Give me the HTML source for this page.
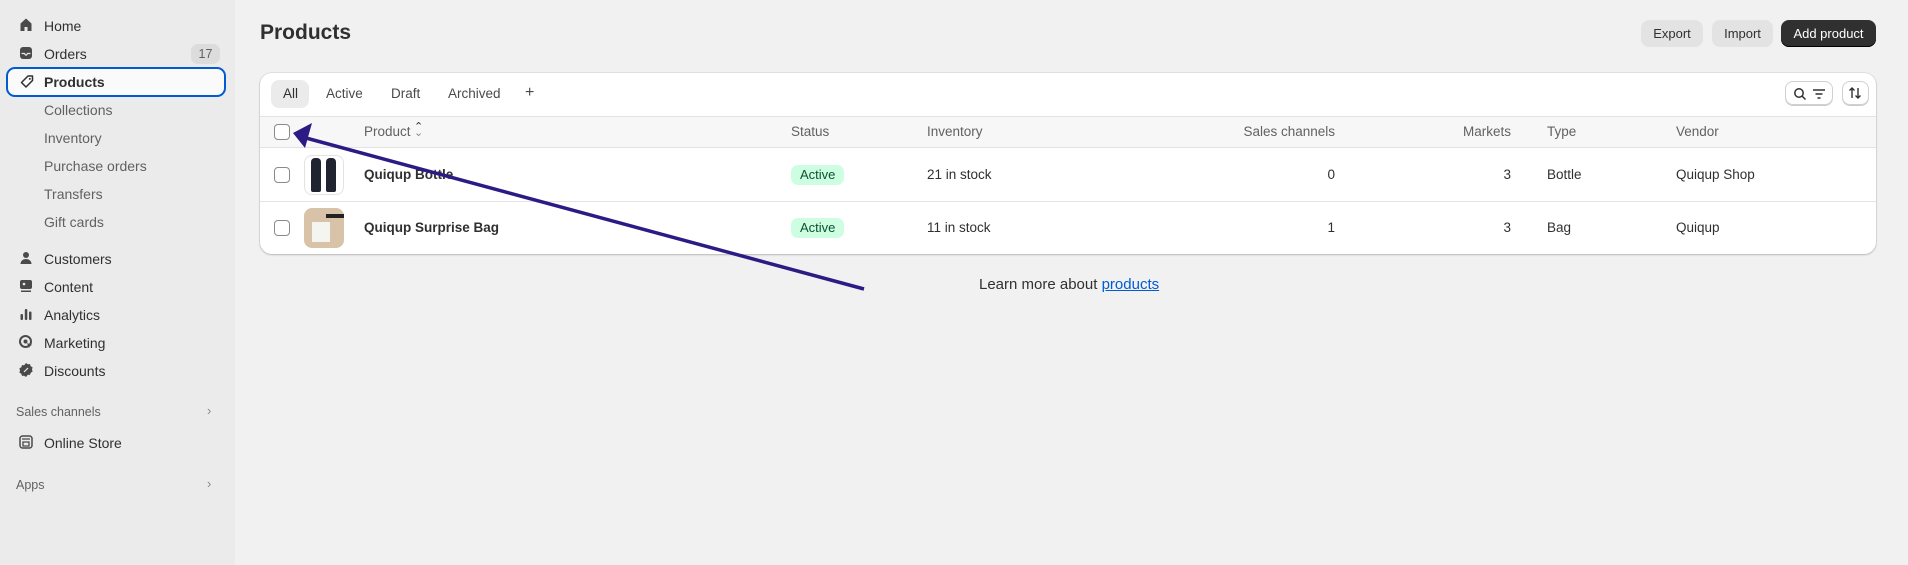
<!DOCTYPE html>
<html><head><meta charset="utf-8"><style>
*{box-sizing:border-box;margin:0;padding:0}
body{width:1908px;height:565px;overflow:hidden;background:#f1f1f1;font-family:"Liberation Sans",sans-serif;color:#303030;position:relative}
.side{position:absolute;left:0;top:0;width:235px;height:565px;background:#ebebeb}
.ni{position:absolute;left:44px;font-size:14px;color:#303030;line-height:18px}
.sub{position:absolute;left:44px;font-size:14px;color:#616161;line-height:18px}
.ic{position:absolute;left:18px;width:16px;height:16px}
.abs{position:absolute}
.card{position:absolute;left:260px;top:73px;width:1616px;height:181px;background:#fff;border-radius:12px;box-shadow:0 1px 2px rgba(0,0,0,.18),0 0 0 1px rgba(0,0,0,.06);overflow:hidden}
.hdr{position:absolute;left:0;top:43px;width:100%;height:32px;background:#f7f7f7;border-top:1px solid #e3e3e3;border-bottom:1px solid #e3e3e3}
.row{position:absolute;left:0;width:100%;border-bottom:1px solid #e3e3e3}
.t{position:absolute;font-size:13.5px;line-height:16px}
.cb{position:absolute;left:14px;width:16px;height:16px;border:1px solid #8a8a8a;border-radius:4px;background:#fff}
.btn{position:absolute;top:20px;height:27px;border-radius:8px;background:#e3e3e3;font-size:13px;line-height:27px;text-align:center;color:#303030}
.badge{position:absolute;left:531px;height:20px;padding:0 9px;background:#cdfee1;color:#0c5132;border-radius:7px;font-size:13px;line-height:20px}
</style></head><body>
<div class="side">
 <svg class="ic" style="top:17px" viewBox="0 0 16 16"><path d="M8 1.5L2.5 6.5V14h4v-4h3v4h4V6.5z" fill="#4a4a4a"/></svg>
 <div class="ni" style="top:17px">Home</div>
 <svg class="ic" style="top:45px" viewBox="0 0 16 16"><rect x="2" y="2" width="12" height="12" rx="3" fill="#4a4a4a"/><path d="M3.5 8.5h3l1 1.5h1l1-1.5h3" stroke="#ebebeb" stroke-width="1.2" fill="none"/></svg>
 <div class="ni" style="top:45px">Orders</div>
 <div class="abs" style="left:191px;top:44px;width:29px;height:20px;background:#dcdcdc;border-radius:7px;font-size:12.5px;line-height:20px;text-align:center;color:#616161">17</div>
 <div class="abs" style="left:6px;top:67px;width:220px;height:30px;border:2px solid #005bd3;border-radius:9px;background:#fafafa"></div>
 <svg class="ic" style="top:74px;left:19px" viewBox="0 0 16 16"><path d="M9 2h4.5v4.5L7 13 2.5 8.5z" fill="none" stroke="#303030" stroke-width="1.5" stroke-linejoin="round"/><circle cx="10.8" cy="4.9" r="1" fill="#303030"/></svg>
 <div class="ni" style="top:73px;font-weight:700">Products</div>
 <div class="sub" style="top:101px">Collections</div>
 <div class="sub" style="top:129px">Inventory</div>
 <div class="sub" style="top:157px">Purchase orders</div>
 <div class="sub" style="top:185px">Transfers</div>
 <div class="sub" style="top:213px">Gift cards</div>
 <svg class="ic" style="top:250px" viewBox="0 0 16 16"><circle cx="8" cy="5" r="3" fill="#4a4a4a"/><path d="M2.5 14c0-3 2.5-5 5.5-5s5.5 2 5.5 5z" fill="#4a4a4a"/></svg>
 <div class="ni" style="top:250px">Customers</div>
 <svg class="ic" style="top:278px" viewBox="0 0 16 16"><rect x="2" y="2" width="12" height="9" rx="2" fill="#4a4a4a"/><circle cx="6" cy="6" r="1.3" fill="#ebebeb"/><rect x="3" y="12.5" width="10" height="1.5" fill="#4a4a4a"/></svg>
 <div class="ni" style="top:278px">Content</div>
 <svg class="ic" style="top:306px" viewBox="0 0 16 16"><rect x="2.5" y="8" width="2.5" height="6" rx="1" fill="#4a4a4a"/><rect x="6.8" y="3" width="2.5" height="11" rx="1" fill="#4a4a4a"/><rect x="11" y="5.5" width="2.5" height="8.5" rx="1" fill="#4a4a4a"/></svg>
 <div class="ni" style="top:306px">Analytics</div>
 <svg class="ic" style="top:334px" viewBox="0 0 16 16"><circle cx="7.5" cy="7.5" r="5.5" fill="none" stroke="#4a4a4a" stroke-width="2"/><circle cx="7.5" cy="7.5" r="2" fill="#4a4a4a"/><path d="M9 9l5 2-2 1-1 2z" fill="#4a4a4a"/></svg>
 <div class="ni" style="top:334px">Marketing</div>
 <svg class="ic" style="top:362px" viewBox="0 0 16 16"><path d="M8 1l1.8 1.3 2.2-.2.7 2.1 1.9 1.2-.6 2.1.6 2.1-1.9 1.2-.7 2.1-2.2-.2L8 15l-1.8-1.3-2.2.2-.7-2.1-1.9-1.2.6-2.1-.6-2.1 1.9-1.2.7-2.1 2.2.2z" fill="#4a4a4a"/><path d="M6 10l4-4" stroke="#ebebeb" stroke-width="1.2"/></svg>
 <div class="ni" style="top:362px">Discounts</div>
 <div class="abs" style="left:16px;top:405px;font-size:12.5px;color:#616161">Sales channels</div>
 <div class="abs" style="left:207px;top:403px;font-size:13px;color:#8a8a8a">›</div>
 <svg class="ic" style="top:434px" viewBox="0 0 16 16"><rect x="2" y="2" width="12" height="12" rx="2.5" fill="none" stroke="#4a4a4a" stroke-width="1.5"/><path d="M4 5h8M5 8h6v4H5z" stroke="#4a4a4a" stroke-width="1.3" fill="none"/></svg>
 <div class="ni" style="top:434px">Online Store</div>
 <div class="abs" style="left:16px;top:478px;font-size:12.5px;color:#616161">Apps</div>
 <div class="abs" style="left:207px;top:476px;font-size:13px;color:#8a8a8a">›</div>
</div>

<div class="abs" style="left:260px;top:21px;font-size:21px;font-weight:700;color:#303030">Products</div>
<div class="btn" style="left:1641px;width:62px">Export</div>
<div class="btn" style="left:1712px;width:61px">Import</div>
<div class="btn" style="left:1781px;width:95px;background:#303030;color:#fff;box-shadow:inset 0 -1px 0 #000">Add product</div>

<div class="card">
 <div class="abs" style="left:11px;top:7px;width:38px;height:28px;border-radius:8px;background:#ebebeb"></div>
 <div class="t" style="left:23px;top:13px">All</div>
 <div class="t" style="left:66px;top:13px;color:#4a4a4a">Active</div>
 <div class="t" style="left:131px;top:13px;color:#4a4a4a">Draft</div>
 <div class="t" style="left:188px;top:13px;color:#4a4a4a">Archived</div>
 <div class="t" style="left:265px;top:12px;font-size:16px;color:#4a4a4a">+</div>
 <div class="abs" style="left:1525px;top:8px;width:48px;height:24px;border:1px solid #d0d0d0;border-radius:8px;box-shadow:0 1px 0 #ccc"></div>
 <svg class="abs" style="left:1532px;top:13px" width="16" height="16" viewBox="0 0 16 16"><circle cx="7" cy="7" r="4.2" fill="none" stroke="#303030" stroke-width="1.5"/><path d="M10 10l3.5 3.5" stroke="#303030" stroke-width="1.5"/></svg>
 <svg class="abs" style="left:1551px;top:13px" width="16" height="16" viewBox="0 0 16 16"><path d="M2 4h12M4.5 8h7M6.5 12h3" stroke="#303030" stroke-width="1.5"/></svg>
 <div class="abs" style="left:1582px;top:8px;width:27px;height:24px;border:1px solid #d0d0d0;border-radius:8px;box-shadow:0 1px 0 #ccc"></div>
 <svg class="abs" style="left:1587px;top:12px" width="16" height="16" viewBox="0 0 16 16"><path d="M5 13V3M2.5 5.5L5 3l2.5 2.5M11 3v10M8.5 10.5L11 13l2.5-2.5" stroke="#303030" stroke-width="1.4" fill="none"/></svg>

 <div class="hdr">
  <div class="cb" style="top:7px"></div>
  <div class="t" style="left:104px;top:7px;color:#616161">Product</div>
  <div class="t" style="left:154px;top:5px;font-size:11px;line-height:10px;color:#303030">⌃</div>
  <div class="t" style="left:154px;top:11px;font-size:11px;line-height:10px;color:#8a8a8a">⌄</div>
  <div class="t" style="left:531px;top:7px;color:#616161">Status</div>
  <div class="t" style="left:667px;top:7px;color:#616161">Inventory</div>
  <div class="t" style="left:975px;width:100px;text-align:right;top:7px;color:#616161">Sales channels</div>
  <div class="t" style="left:1151px;width:100px;text-align:right;top:7px;color:#616161">Markets</div>
  <div class="t" style="left:1287px;top:7px;color:#616161">Type</div>
  <div class="t" style="left:1416px;top:7px;color:#616161">Vendor</div>
 </div>

 <div class="row" style="top:75px;height:54px">
  <div class="cb" style="top:19px"></div>
  <div class="abs" style="left:44px;top:7px;width:40px;height:40px;border:1px solid #e3e3e3;border-radius:8px;background:#fff"></div>
  <div class="abs" style="left:51px;top:10px;width:10px;height:34px;background:#1f2430;border-radius:4px 4px 2px 2px"></div>
  <div class="abs" style="left:66px;top:10px;width:10px;height:34px;background:#1f2430;border-radius:4px 4px 2px 2px"></div>
  <div class="t" style="left:104px;top:19px;font-weight:700">Quiqup Bottle</div>
  <div class="badge" style="top:17px">Active</div>
  <div class="t" style="left:667px;top:19px">21 in stock</div>
  <div class="t" style="left:975px;width:100px;text-align:right;top:19px">0</div>
  <div class="t" style="left:1151px;width:100px;text-align:right;top:19px">3</div>
  <div class="t" style="left:1287px;top:19px">Bottle</div>
  <div class="t" style="left:1416px;top:19px">Quiqup Shop</div>
 </div>
 <div class="row" style="top:129px;height:52px;border-bottom:none">
  <div class="cb" style="top:18px"></div>
  <div class="abs" style="left:44px;top:6px;width:40px;height:40px;border-radius:8px;background:#d9c3a8"></div>
  <div class="abs" style="left:52px;top:20px;width:18px;height:20px;background:#f4f4f0"></div>
  <div class="abs" style="left:66px;top:12px;width:18px;height:4px;background:#222"></div>
  <div class="t" style="left:104px;top:18px;font-weight:700">Quiqup Surprise Bag</div>
  <div class="badge" style="top:16px">Active</div>
  <div class="t" style="left:667px;top:18px">11 in stock</div>
  <div class="t" style="left:975px;width:100px;text-align:right;top:18px">1</div>
  <div class="t" style="left:1151px;width:100px;text-align:right;top:18px">3</div>
  <div class="t" style="left:1287px;top:18px">Bag</div>
  <div class="t" style="left:1416px;top:18px">Quiqup</div>
 </div>
</div>

<div class="abs" style="left:979px;top:276px;font-size:15px;color:#303030">Learn more about <span style="color:#005bd3;text-decoration:underline">products</span></div>

<svg class="abs" style="left:0;top:0" width="1908" height="565"><path d="M864 289L306 138" stroke="#2d1b85" stroke-width="3.5"/><path d="M293 133L312 123L305 148z" fill="#2d1b85"/></svg>
</body></html>
